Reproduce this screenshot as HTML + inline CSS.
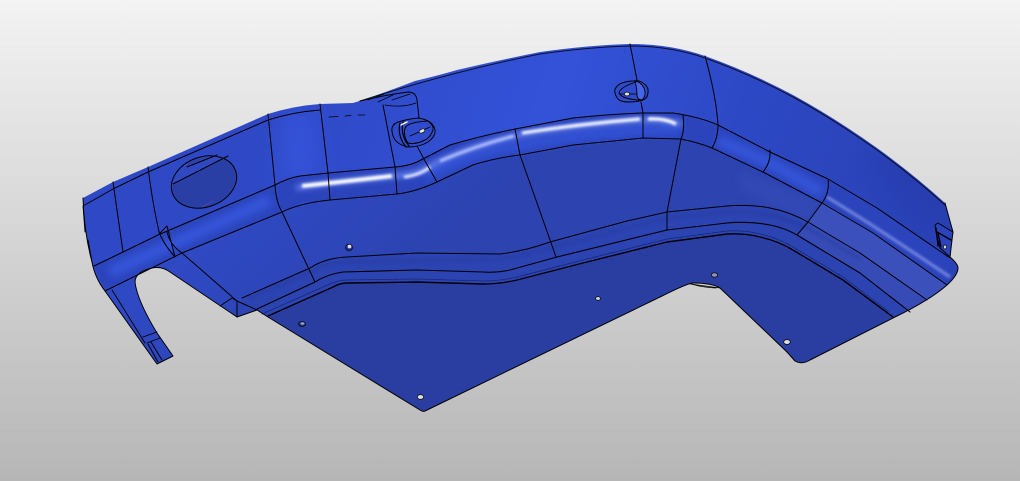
<!DOCTYPE html>
<html><head><meta charset="utf-8"><style>
html,body{margin:0;padding:0;width:1020px;height:481px;overflow:hidden;background:#d0d0d0}
svg{display:block}
</style></head><body>
<svg width="1020" height="481" viewBox="0 0 1020 481" xmlns="http://www.w3.org/2000/svg">
<defs>
<linearGradient id="bg" x1="0" y1="0" x2="0" y2="1"><stop offset="0" stop-color="#f3f3f3"/><stop offset="1" stop-color="#b6b6b6"/></linearGradient>
<linearGradient id="up" gradientUnits="userSpaceOnUse" x1="300" y1="60" x2="900" y2="260"><stop offset="0" stop-color="#2f49c6"/><stop offset=".4" stop-color="#3352d8"/><stop offset=".7" stop-color="#2d48c4"/><stop offset="1" stop-color="#2a42b6"/></linearGradient>
<linearGradient id="mid" gradientUnits="userSpaceOnUse" x1="300" y1="160" x2="400" y2="280"><stop offset="0" stop-color="#2f49c4"/><stop offset="1" stop-color="#2c43b0"/></linearGradient>
<filter id="b1" filterUnits="userSpaceOnUse" x="0" y="0" width="1020" height="481"><feGaussianBlur stdDeviation="1.3"/></filter>
<filter id="b2" filterUnits="userSpaceOnUse" x="0" y="0" width="1020" height="481"><feGaussianBlur stdDeviation="2.6"/></filter>
<filter id="b3" filterUnits="userSpaceOnUse" x="0" y="0" width="1020" height="481"><feGaussianBlur stdDeviation="4"/></filter>
<filter id="b8" filterUnits="userSpaceOnUse" x="0" y="0" width="1020" height="481"><feGaussianBlur stdDeviation="11"/></filter>
<path id="o" d="M83 198L113 182L148 167L268 114Q293 106 320 104L353 103Q373 97 415 81Q440 75 457 70Q500 60 540 52Q590 45 630 44Q670 44 705 56Q750 72 793 95Q835 118 877 148Q913 174 945 203L953 232L951 240L950 257Q958 264 958 268Q958 275 947 285Q930 300 895 317L810 360Q802 365 795 361L787 352L720 288Q712 283 693 283Q688 283 660 297L425 411Q423 412 420 410L268 317L257 310L237 317L170 272Q162 266 152 268Q135 272 135 282Q137 300 157 333L173 356L157 364L105 291Q95 278 92 262Q84 232 83 198Z"/>
<clipPath id="c"><use href="#o"/></clipPath>
<clipPath id="el"><ellipse cx="204" cy="182" rx="33.5" ry="25" transform="rotate(-20 204 182)"/></clipPath>
</defs>
<rect width="1020" height="481" fill="url(#bg)"/>
<use href="#o" fill="url(#up)"/>
<g clip-path="url(#c)">
<!-- soft shading upper -->
<path d="M298 112L298 180" stroke="#3b5ce8" stroke-width="36" fill="none" opacity=".5" filter="url(#b8)"/>
<path d="M885 150L950 215" stroke="#2238a4" stroke-width="40" fill="none" opacity=".35" filter="url(#b8)"/>
<!-- below channel -->
<path d="M105 291L182 253L282 212Q300 203 330 200L397 194Q415 191 437 182L473 165Q495 158 520 155L573 145L643 138L681 139Q700 143 712 148L763 172L822 203L873 233L960 290L900 330L700 420L200 420L80 330Z" fill="url(#mid)"/>
<path d="M250 294L308 268Q325 257 345 256L417 253L500 254Q520 252 550 242L627 221L667 212L727 206Q750 204 770 208Q790 212 808 222L860 253L927 300L895 330L500 420L220 320Z" fill="#2c43b2"/>
<!-- lower flange -->
<path d="M268 316L333 287Q340 283 347 283L417 282L483 284Q500 284 517 280L583 263L667 242L727 234Q745 233 760 237Q778 241 793 250L843 280L893 317L820 380L420 420Z" fill="#2a3da1"/>
<!-- light right faces -->
<path d="M822 203L873 233L947 285L927 302L860 253L808 222Z" fill="#3e52bc" opacity=".9"/>
<path d="M808 222L860 253L927 300L910 312L860 273L797 235Z" fill="#3a4eb6" opacity=".7"/>
<path d="M740 170L822 203L808 222L740 190Z" fill="#3a4fbb" opacity=".45" filter="url(#b3)"/>
<!-- channel band -->
<path d="M94 266L123 252L158 235L275 185Q290 178 300 176L328 173L395 167Q410 165 417 162L450 145L515 129L573 118L642 113L673 113L683 115L718 125L770 152L828 179L877 208L950 258L947 285L873 233L822 203L763 172L712 148L681 139L643 138L573 145L520 155L473 165L437 182L410 192L397 194L330 200Q310 201 300 203L282 212L182 253L105 291Z" fill="#2b44bc"/>
<path d="M110 272L270 200" stroke="#3556dc" stroke-width="11" fill="none" filter="url(#b3)"/>
<path d="M718 140L770 163L822 192" stroke="#3556dc" stroke-width="10" fill="none" filter="url(#b3)"/>
<path d="M425 175Q480 148 520 145Q600 130 680 128" stroke="#3151d4" stroke-width="12" fill="none" filter="url(#b3)"/>
<!-- highlights -->
<path d="M296 188Q315 184 396 176Q420 174 434 164Q470 146 514 136Q570 125 642 120Q660 119 682 124" stroke="#6f88f2" stroke-width="6" fill="none" opacity=".75" filter="url(#b2)"/>
<path d="M302 186Q340 182 392 176" stroke="#ffffff" stroke-width="4" fill="none" filter="url(#b1)"/>
<path d="M404 177Q420 175 430 167" stroke="#e8edff" stroke-width="3" fill="none" filter="url(#b1)"/>
<path d="M440 161Q478 145 514 136" stroke="#b4c1ff" stroke-width="3" fill="none" filter="url(#b1)"/>
<path d="M522 133Q580 124 640 119" stroke="#f2f5ff" stroke-width="3.4" fill="none" filter="url(#b1)"/>
<path d="M648 119Q665 118 676 124" stroke="#ffffff" stroke-width="3.4" fill="none" filter="url(#b1)"/>
<path d="M827 197L867 222Q910 250 950 277" stroke="#7486e0" stroke-width="3" fill="none" filter="url(#b1)"/>
<!-- darker grooves -->
<path d="M250 298L308 273Q325 263 345 262L500 259Q520 257 550 248L667 218L727 212Q770 210 808 228L860 259" stroke="#22348f" stroke-width="3" fill="none" opacity=".3" filter="url(#b1)"/>
</g>

<!-- hole -->
<ellipse cx="204" cy="182" rx="33.5" ry="25" transform="rotate(-20 204 182)" fill="#2a3fa6"/>
<g clip-path="url(#el)">
<path d="M165 150L240 150L228 157L173 185L165 190Z" fill="#3049c2"/>
<path d="M187 167L217 155L240 150L190 150Z" fill="#2d44b0"/>
</g>
<g fill="none" stroke="#000" stroke-width="1" stroke-linejoin="round" stroke-linecap="round">
<ellipse cx="204" cy="182" rx="33.5" ry="25" transform="rotate(-20 204 182)"/>
<path d="M173 184L228 156M187 167L217 155"/>
<path d="M202 207L213 201" stroke-dasharray="1 1" stroke="#3a4fb0"/>

<!-- long curves -->
<path d="M83 206L113 189L148 172L268 120Q293 112 320 110"/>
<path d="M360 101Q410 85 457 73Q500 62 540 54Q590 47 630 46Q670 46 705 58Q750 74 793 97Q835 120 877 150Q913 176 945 205" stroke-opacity=".8"/>
<path d="M94 266L123 252L158 235L275 185Q288 178 300 176L328 173L395 167Q408 166 417 162L450 145Q480 136 515 129L573 118Q610 114 642 113L673 113Q700 117 718 125L770 152L828 179L877 208L950 258"/>
<path d="M105 291L182 253L282 212Q300 203 330 200L397 194Q415 192 437 182L473 165Q495 158 520 155L573 145L643 138L681 139Q700 143 712 148L763 172L822 203L873 233L947 285"/>
<path d="M242 298L310 268Q325 258 347 257L417 253L500 254Q525 251 550 242L627 221L667 212L727 206Q750 204 770 208Q790 212 808 222L860 253L927 300"/>
<path d="M257 309L315 282Q328 274 343 272L417 270L483 272Q497 273 510 270L557 257L667 230L727 223Q750 221 770 225Q785 228 797 235L860 273L910 312" stroke-width="1.1"/>
<path d="M268 316L333 287Q340 283 347 283L417 282L483 284Q500 284 517 280L583 263L667 242L727 234Q745 233 760 237Q778 241 793 250L843 280L893 317" stroke-width="1.4"/>
<path d="M262 314L330 284Q340 280 347 280L417 279L483 281Q500 281 517 277L583 260L667 239L727 231Q745 230 760 234Q778 238 793 247L843 277L889 312" stroke="#15246e" stroke-dasharray="1.5 1" stroke-width=".8"/>

<!-- cross lines -->
<path d="M113 182L123 252"/>
<path d="M148 167Q152 200 158 227Q160 240 175 257"/>
<path d="M158 235L167 226L175 257M167 232Q170 245 182 253"/>
<path d="M182 253L237 301L257 310M220 306L232 298L237 301L237 317"/>
<path d="M268 114L275 185Q276 202 282 212L315 282"/>
<path d="M320 104L328 173L330 200"/>
<path d="M383 105L395 167L397 194"/>
<path d="M417 146L425 161L437 182"/>
<path d="M515 129L520 155L543 220L556 257"/>
<path d="M630 44L637 80M641 102L643 113L643 138"/>
<path d="M683 115Q685 130 681 139L667 212L667 230"/>
<path d="M705 56Q716 95 718 125Q718 138 712 148"/>
<path d="M770 150Q771 162 763 172"/>
<path d="M828 179Q830 192 822 203L808 222L797 235"/>
<path d="M329 117L338 116.5M345 116L351 115.5M358 115L365 115" stroke-width=".8"/>

<!-- leg -->
<path d="M112 290L145 343M143 337L157 332M147 343L160 338M148 344L158 362M151 342L162 360M83 206L85 232M88 240L92 262" stroke-width=".9"/>

<!-- outline -->
<path d="M945 203L953 232L951 240L950 257Q958 264 958 268Q958 275 947 285Q930 300 895 317L810 360Q802 365 795 361L787 352L720 288Q712 283 693 283Q688 283 660 297L425 411Q423 412 420 410L268 317L257 310L237 317L170 272Q162 266 152 268Q135 272 135 282Q137 300 157 333L173 356L157 364L105 291Q95 278 92 262Q84 232 83 198"/>
<path d="M693 283L690 284L720 288" stroke-width=".8"/>

<!-- left tab -->
<path d="M360 101Q385 95 408 92Q416 92 417 100L419 118" />
<path d="M385 105Q402 108 416 103M368 100L384 94M378 102L393 95M392 100L410 94" stroke-width=".8"/>
<path d="M418 118Q408 119 398 122Q391 125 392 131Q393 144 408 147Q420 147 428 142Q436 136 435 130Q433 120 418 118Z" fill="#2f4bcb"/>
<path d="M400 123Q397 136 406 147M403 122Q400 135 409 146" stroke-width="1.2"/>
<path d="M405 128Q408 122 428 121Q434 126 433 130Q430 138 425 140Q415 145 408 143Q403 136 405 128Z"/>
<path d="M410 136L430 127" stroke-width=".8"/>
<path d="M401 125L407 122" stroke="#fff" stroke-width="1.4"/>
<ellipse cx="422" cy="131" rx="3" ry="1.8" fill="#e6e6e6" stroke-width=".7" transform="rotate(-25 422 131)"/>

<!-- right boss -->
<path d="M615 89Q618 84 622 83Q628 81 633 81Q640 80 643 83Q649 87 648 92Q648 98 643 100Q636 102 628 102Q621 102 618 99Q614 94 615 89Z" fill="#2f4bcb"/>
<path d="M635 81Q641 82 644 88Q647 95 642 100Q638 100 637 96Q637 88 635 81Z" fill="#4566e6" stroke-width=".9"/>
<path d="M619 93Q620 87 636 82M619 93Q622 99 639 100" stroke-width=".9"/>
<path d="M619 94L637 94" stroke-width=".8"/>
<ellipse cx="627" cy="94" rx="2.6" ry="1.9" fill="#e0e0e0" stroke-width=".7"/>

<!-- right clip -->
<path d="M935 225L938 223L953 232L952 240L950 257L940 248L936 232Z" fill="#2b44bc"/>
<path d="M937 232L951 240M938 233L941 247M936 228L938 246" stroke-width="1.3"/>
<ellipse cx="945" cy="247" rx="1.6" ry="2" fill="#d5d5d5" stroke-width=".7"/>

<!-- small holes -->
<ellipse cx="349" cy="247.500" rx="3.5" ry="3.4" fill="#23307e" stroke-width=".6"/>
<ellipse cx="302" cy="324" rx="3.5" ry="2.4" fill="#23307e" stroke-width=".6"/>
<ellipse cx="420.500" cy="397" rx="3.2" ry="2.3" fill="#dcdcdc" stroke-width=".7"/>
<ellipse cx="598" cy="298.500" rx="2.4" ry="1.8" fill="#cfcfcf" stroke-width=".7"/>
<ellipse cx="714.500" cy="275" rx="3.2" ry="2.2" fill="#8d93b0" stroke-width=".7"/>
<ellipse cx="787" cy="342" rx="3.3" ry="2.4" fill="#dedede" stroke-width=".7"/>
<path d="M692 284Q700 287 716 288" stroke-width=".8"/>
</g>
<ellipse cx="349.500" cy="246.500" rx="1.9" ry="1.9" fill="#d9dbe4"/>
<ellipse cx="302.500" cy="323.500" rx="2" ry="1.1" fill="#a9aec8"/>
</svg>
</body></html>
